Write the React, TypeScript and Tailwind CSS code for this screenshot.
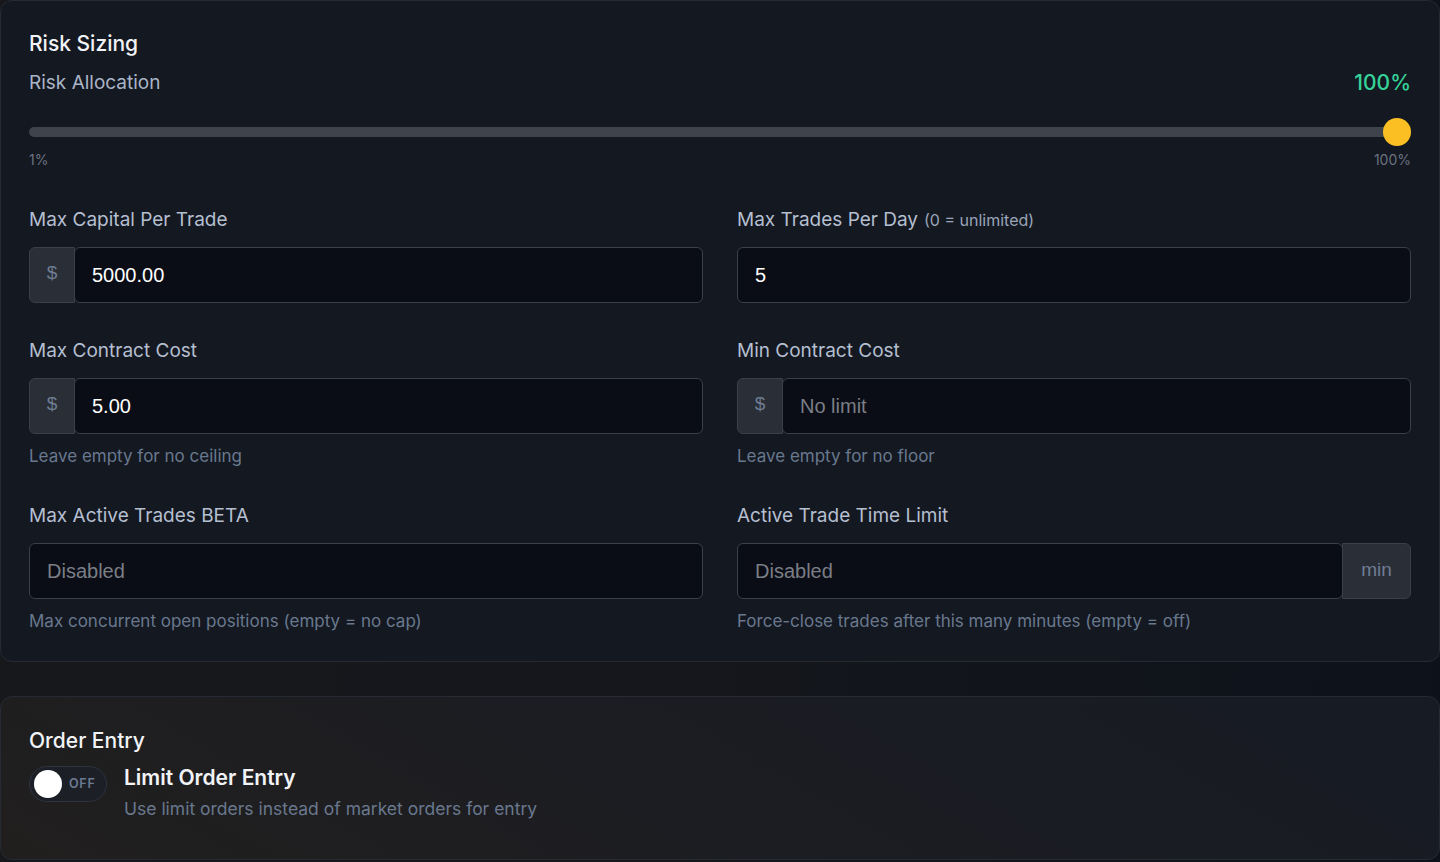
const sans = "font-['Inter','Noto_Sans',sans-serif]";
const arial = "font-['Liberation_Sans','Arial',sans-serif]";

interface IField {
  label: string;
  note?: string;
  value?: string;
  placeholder?: string;
  prefix?: string;
  suffix?: string;
  help?: string;
}

function Field({ label, note, value, placeholder, prefix, suffix, help }: IField) {
  return (
    <div className="flex flex-col">
      <div className="flex h-7 items-center gap-1.5 text-[19px] text-[#b4bfd0]">
        <span>{label}</span>
        {note && <span className="text-[16px] text-[#9aa5b8]">{note}</span>}
      </div>
      <div className="mt-[13px] flex h-14">
        {prefix && (
          <div
            className={`flex w-[46px] shrink-0 items-center justify-center rounded-l-md border border-[#3a3f4a] bg-[#2a2e36] pb-1 text-[19px] text-[#6f7d94] ${arial}`}
          >
            {prefix}
          </div>
        )}
        <div
          className={`flex flex-1 items-center rounded-md border border-[#3a3f4a] bg-[#0a0d15] px-[17px] text-[20px] ${arial} ${
            prefix ? '-ml-px' : ''
          } ${suffix ? 'z-10' : ''}`}
        >
          {value ? (
            <span className="text-white">{value}</span>
          ) : (
            <span className="text-[#7a7e86]">{placeholder}</span>
          )}
        </div>
        {suffix && (
          <div
            className={`-ml-px flex w-[69px] shrink-0 items-center justify-center rounded-r-md border border-[#3a3f4a] bg-[#2a2e36] pb-0.5 text-[19px] text-[#6f7d94] ${arial}`}
          >
            {suffix}
          </div>
        )}
      </div>
      {help && <div className="mt-2.5 h-6 text-[17px] leading-6 text-[#69788e]">{help}</div>}
    </div>
  );
}

export default function App() {
  return (
    <div
      className={`min-h-[862px] w-full bg-[linear-gradient(100deg,#17181b_0%,#15171c_50%,#0d111a_100%)] ${sans}`}
    >
      <section className="rounded-xl border border-[#262a33] bg-[#141821] px-7 pt-[29px] pb-[28px]">
        <h2 className="h-7 text-[21px] leading-7 font-medium text-[#f1f3f6]">Risk Sizing</h2>
        <div className="mt-3 flex items-center justify-between">
          <span className="text-[19px] leading-[26px] text-[#aab5c7]">Risk Allocation</span>
          <span className="text-[21px] leading-[26px] font-medium text-[#34d399]">100%</span>
        </div>
        <div className="relative mt-[22px] flex h-7 items-center">
          <div className="h-2.5 w-full rounded-full bg-[#3f434b]" />
          <div className="absolute right-0 top-0 h-7 w-7 rounded-full bg-[#fbbf24]" />
        </div>
        <div className="mt-1 flex justify-between text-[14px] leading-5 text-[#6b7280]">
          <span>1%</span>
          <span>100%</span>
        </div>

        <div className="mt-9 grid grid-cols-2 gap-x-[34px] gap-y-[34px]">
          <Field label="Max Capital Per Trade" prefix="$" value="5000.00" />
          <Field label="Max Trades Per Day" note="(0 = unlimited)" value="5" />
          <Field label="Max Contract Cost" prefix="$" value="5.00" help="Leave empty for no ceiling" />
          <Field label="Min Contract Cost" prefix="$" placeholder="No limit" help="Leave empty for no floor" />
          <Field
            label="Max Active Trades BETA"
            placeholder="Disabled"
            help="Max concurrent open positions (empty = no cap)"
          />
          <Field
            label="Active Trade Time Limit"
            placeholder="Disabled"
            suffix="min"
            help="Force-close trades after this many minutes (empty = off)"
          />
        </div>
      </section>

      <section className="mt-[34px] h-[164px] rounded-xl border border-[#262a33] bg-[linear-gradient(30deg,#211f1e_0%,#1c1d22_45%,#171b24_100%)] px-7 pt-[30px]">
        <h2 className="h-7 text-[21px] leading-7 font-medium text-[#f1f3f6]">Order Entry</h2>
        <div className="mt-[11px] flex items-start gap-[17px]">
          <div className="flex h-9 w-[78px] shrink-0 items-center rounded-full border border-[#2e333d] bg-[#1c1f26] px-[4px]">
            <div className="h-7 w-7 rounded-full bg-white" />
            <span className="ml-[7px] text-[12.5px] font-semibold tracking-[0.06em] text-[#6b7a90]">OFF</span>
          </div>
          <div className="-mt-[2px] flex flex-col">
            <span className="text-[21px] leading-7 font-semibold text-[#f1f3f6]">Limit Order Entry</span>
            <span className="mt-[5px] text-[17.5px] leading-6 text-[#69788e]">
              Use limit orders instead of market orders for entry
            </span>
          </div>
        </div>
      </section>
    </div>
  );
}
